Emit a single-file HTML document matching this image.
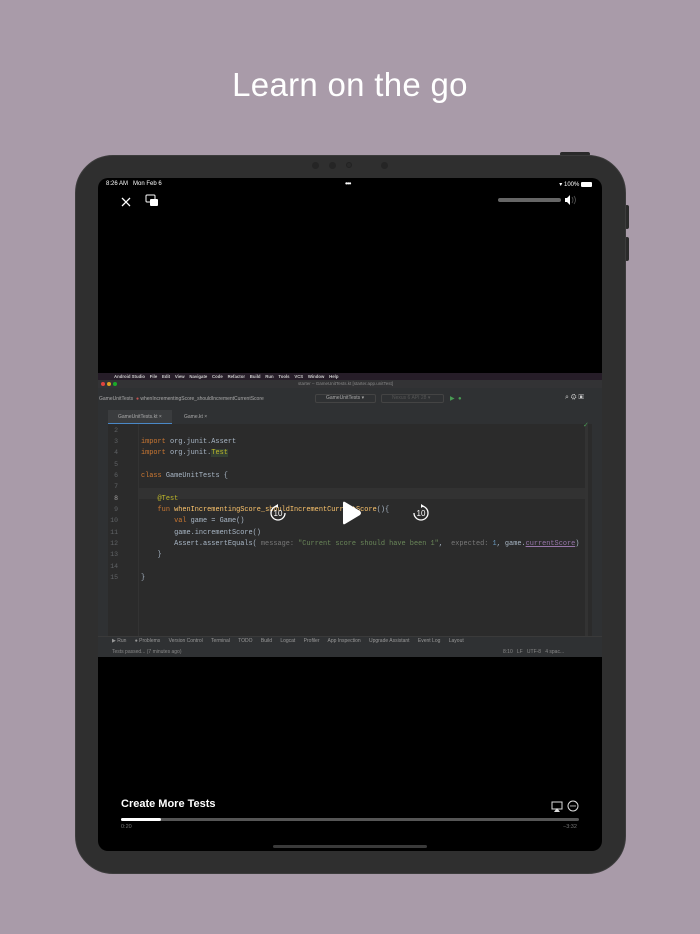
<!DOCTYPE html>
<html><head><meta charset="utf-8"><style>
*{margin:0;padding:0;box-sizing:border-box}
body{width:700px;height:934px;background:#a99ba9;position:relative;overflow:hidden;font-family:"Liberation Sans",sans-serif}
.h1{position:absolute;top:66px;left:0;width:700px;text-align:center;color:#fff;font-size:33px;letter-spacing:.3px}
.dev{position:absolute;left:75px;top:155px;width:551px;height:719px;background:#2f2f2f;border-radius:38px;border:1px solid #3c3c3c}
.btn{position:absolute;background:#2a2a2a}
.scr{position:absolute;left:98px;top:178px;width:504px;height:673px;background:#000;border-radius:10px;overflow:hidden}
.a{position:absolute}
.mono{font-family:"Liberation Mono",monospace}
.code div{position:absolute;left:43px;font-size:6.9px;white-space:pre;color:#a9b7c6}
.ln{position:absolute;left:10px;width:10px;text-align:right;font-size:6.5px;color:#606366}
.k{color:#cc7832}.f{color:#ffc66d}.s{color:#6a8759}.h{color:#787878}.p{color:#9876aa;text-decoration:underline}.an{color:#bbb529}
.pre{white-space:pre}
</style></head><body>
<div class="h1">Learn on the go</div>
<div class="btn" style="left:560px;top:152px;width:30px;height:4px;border-radius:2px"></div>
<div class="btn" style="left:625px;top:205px;width:4px;height:24px;border-radius:2px"></div>
<div class="btn" style="left:625px;top:237px;width:4px;height:24px;border-radius:2px"></div>
<div class="dev"></div>
<div class="a" style="left:312px;top:162px;width:7px;height:7px;border-radius:50%;background:#252525"></div>
<div class="a" style="left:329px;top:162px;width:7px;height:7px;border-radius:50%;background:#252525"></div>
<div class="a" style="left:346px;top:162px;width:6px;height:6px;border-radius:50%;background:#2a2a2a;border:1px solid #222"></div>
<div class="a" style="left:381px;top:162px;width:7px;height:7px;border-radius:50%;background:#252525"></div>
<div class="scr">
 <div class="a" style="left:8px;top:3px;color:#fff;font-size:6px">8:26 AM&nbsp;&nbsp; Mon Feb 6</div>
 <div class="a" style="left:247px;top:1px;color:#fff;font-size:8px;letter-spacing:-1px">•••</div>
 <div class="a" style="right:10px;top:3px;color:#fff;font-size:6px">&#x25BE; 100% <span style="display:inline-block;width:11px;height:5px;background:#fff;border-radius:1px;vertical-align:-0.5px"></span></div>
 <svg class="a" style="left:22px;top:18px" width="12" height="12"><path d="M2 2L10 10M10 2L2 10" stroke="#fff" stroke-width="1.3"/></svg>
 <svg class="a" style="left:47px;top:16px" width="14" height="14"><rect x="1" y="1" width="9" height="7" rx="1" fill="none" stroke="#fff" stroke-width="1"/><rect x="5" y="5" width="8" height="7" rx="1" fill="#fff"/></svg>
 <div class="a" style="left:400px;top:20px;width:63px;height:4px;border-radius:2px;background:#666"></div>
 <svg class="a" style="left:466px;top:16px" width="14" height="12"><path d="M1 4H3L6 1V11L3 8H1Z" fill="#fff"/><path d="M8 3Q10 6 8 9M10 2Q13 6 10 10" stroke="#555" fill="none" stroke-width="0.8"/></svg>

 <!-- IDE -->
 <div class="a" style="left:0;top:195px;width:504px;height:284px;background:#2b2b2b;overflow:hidden">
  <div class="a" style="left:0;top:0;width:504px;height:7px;background:#261d28"></div>
  <div class="a pre" style="left:16px;top:1px;font-size:4.3px;color:#ccc;font-weight:bold">Android Studio    File    Edit    View    Navigate    Code    Refactor    Build    Run    Tools    VCS    Window    Help</div>
  <div class="a" style="left:0;top:7px;width:504px;height:8px;background:#333335"></div>
  <div class="a" style="left:3px;top:9px;width:4px;height:4px;border-radius:50%;background:#e0443e"></div>
  <div class="a" style="left:9px;top:9px;width:4px;height:4px;border-radius:50%;background:#dea123"></div>
  <div class="a" style="left:15px;top:9px;width:4px;height:4px;border-radius:50%;background:#1aab29"></div>
  <div class="a" style="left:200px;top:8px;font-size:4.5px;color:#888">starter – GameUnitTests.kt [starter.app.unitTest]</div>
  <div class="a" style="left:0;top:15px;width:504px;height:22px;background:#2f3133"></div>
  <div class="a pre" style="left:1px;top:23px;font-size:5px;color:#aaa">GameUnitTests  <span style="color:#c75450">●</span> whenIncrementingScore_shouldIncrementCurrentScore</div>
  <div class="a" style="left:217px;top:21px;width:61px;height:9px;border:1px solid #444;border-radius:2px;font-size:5px;color:#aaa;padding-left:10px;line-height:7px">GameUnitTests ▾</div>
  <div class="a" style="left:283px;top:21px;width:63px;height:9px;border:1px solid #444;border-radius:2px;font-size:5px;color:#555;padding-left:10px;line-height:7px">Nexus 6 API 28 ▾</div>
  <div class="a" style="left:352px;top:22px;font-size:6px;color:#499c54">▶&nbsp; ●</div>
  <div class="a" style="left:467px;top:21px;font-size:7px;color:#ccc">⌕ ⚙ ▣</div>
  <div class="a" style="left:0;top:37px;width:504px;height:14px;background:#2f3133"></div>
  <div class="a" style="left:10px;top:37px;width:64px;height:14px;background:#3a3c3e;border-bottom:1.5px solid #4a88c7;font-size:5px;color:#aaa;padding:4px 0 0 10px">GameUnitTests.kt ×</div>
  <div class="a" style="left:76px;top:37px;width:40px;height:14px;font-size:5px;color:#aaa;padding:4px 0 0 10px">Game.kt ×</div>
  <div class="a" style="left:0;top:37px;width:10px;height:226px;background:#2f3133"></div>
  <div class="a" style="left:494px;top:37px;width:10px;height:226px;background:#2f3133"></div>
  <div class="a" style="left:10px;top:51px;width:31px;height:212px;background:#2b2b2b;border-right:1px solid #333"></div>
  <div class="a" style="left:41px;top:115px;width:446px;height:11px;background:#323232"></div>
  <div class="a" style="left:487px;top:51px;width:3px;height:212px;background:#333"></div>
  <div class="a" style="left:485px;top:48px;font-size:7px;color:#499c54">✓</div>
  <div class="code mono">
   <span class="ln a mono" style="top:54px">2</span>
   <span class="ln a mono" style="top:65px">3</span><div style="top:65px"><span class="k">import</span> org.junit.Assert</div>
   <span class="ln a mono" style="top:76px">4</span><div style="top:76px"><span class="k">import</span> org.junit.<span class="an" style="background:#344134">Test</span></div>
   <span class="ln a mono" style="top:88px">5</span>
   <span class="ln a mono" style="top:99px">6</span><div style="top:99px"><span class="k">class</span> GameUnitTests {</div>
   <span class="ln a mono" style="top:110px">7</span>
   <span class="ln a mono" style="top:122px;color:#a4a3a3">8</span><div style="top:122px">    <span class="an">@Test</span></div>
   <span class="ln a mono" style="top:133px">9</span><div style="top:133px">    <span class="k">fun</span> <span class="f">whenIncrementingScore_shouldIncrementCurrentScore</span>(){</div>
   <span class="ln a mono" style="top:144px">10</span><div style="top:144px">        <span class="k">val</span> game = Game()</div>
   <span class="ln a mono" style="top:156px">11</span><div style="top:156px">        game.incrementScore()</div>
   <span class="ln a mono" style="top:167px">12</span><div style="top:167px">        Assert.assertEquals( <span class="h">message:</span> <span class="s">"Current score should have been 1"</span>,  <span class="h">expected:</span> <span style="color:#6897bb">1</span>, game.<span class="p">currentScore</span>)</div>
   <span class="ln a mono" style="top:178px">13</span><div style="top:178px">    }</div>
   <span class="ln a mono" style="top:190px">14</span>
   <span class="ln a mono" style="top:201px">15</span><div style="top:201px">}</div>
  </div>
  <div class="a" style="left:0;top:263px;width:504px;height:11px;background:#2f3133;border-top:1px solid #3a3a3a"></div>
  <div class="a pre" style="left:14px;top:265px;font-size:5px;color:#999">▶ Run      ● Problems      Version Control      Terminal      TODO      Build      Logcat      Profiler      App Inspection      Upgrade Assistant      Event Log      Layout</div>
  <div class="a" style="left:0;top:274px;width:504px;height:10px;background:#2f3133"></div>
  <div class="a" style="left:14px;top:276px;font-size:5px;color:#888">Tests passed... (7 minutes ago)</div>
  <div class="a pre" style="left:405px;top:276px;font-size:5px;color:#888">8:10   LF   UTF-8   4 spac...</div>
 </div>
 <!-- overlay controls -->
 <svg class="a" style="left:171px;top:326px" width="18" height="18"><path d="M9 2A7 7 0 1 0 16 9" stroke="#fff" stroke-width="1.3" fill="none"/><path d="M9 0L6 2L9 4Z" fill="#fff"/><text x="9" y="12" font-size="8" fill="#fff" text-anchor="middle" font-family="Liberation Sans">10</text></svg>
 <svg class="a" style="left:242px;top:323px" width="22" height="24"><path d="M3 2Q3 0 5 1L20 10Q22 12 20 14L5 23Q3 24 3 22Z" fill="#fff"/></svg>
 <svg class="a" style="left:314px;top:326px" width="18" height="18"><path d="M9 2A7 7 0 1 1 2 9" stroke="#fff" stroke-width="1.3" fill="none"/><path d="M9 0L12 2L9 4Z" fill="#fff"/><text x="9" y="12" font-size="8" fill="#fff" text-anchor="middle" font-family="Liberation Sans">10</text></svg>

 <div class="a" style="left:23px;top:620px;color:#fff;font-size:11px;font-weight:bold">Create More Tests</div>
 <svg class="a" style="left:453px;top:623px" width="12" height="12"><rect x="1" y="1" width="10" height="7" fill="none" stroke="#ddd" stroke-width="1"/><path d="M3 11L6 7L9 11Z" fill="#ddd"/></svg>
 <svg class="a" style="left:469px;top:622px" width="12" height="12"><circle cx="6" cy="6" r="5" fill="none" stroke="#ddd" stroke-width="1"/><circle cx="4" cy="6" r=".7" fill="#ddd"/><circle cx="6" cy="6" r=".7" fill="#ddd"/><circle cx="8" cy="6" r=".7" fill="#ddd"/></svg>
 <div class="a" style="left:23px;top:640px;width:458px;height:3px;border-radius:2px;background:#555"></div>
 <div class="a" style="left:23px;top:640px;width:40px;height:3px;border-radius:2px;background:#fff"></div>
 <div class="a" style="left:23px;top:646px;color:#777;font-size:5.5px">0:20</div>
 <div class="a" style="left:465px;top:646px;color:#777;font-size:5.5px">−3:32</div>
 <div class="a" style="left:175px;top:667px;width:154px;height:3px;border-radius:2px;background:#3a3a3a"></div>
</div>
</body></html>
